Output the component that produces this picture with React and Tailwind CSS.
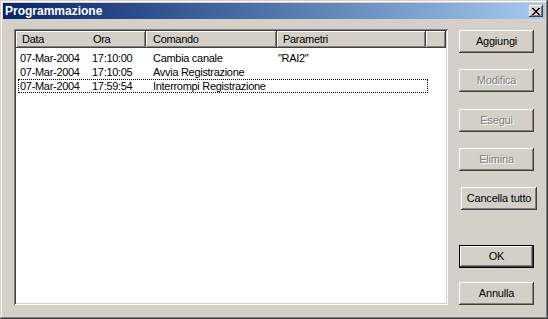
// ===== COSTANTI =====

const FONT = "font-['Liberation_Sans',Arial,sans-serif]"

const RAISED =
  'shadow-[inset_-1px_-1px_#404040,inset_1px_1px_#ffffff,inset_-2px_-2px_#808080,inset_2px_2px_#d4d0c8]'

const rows = [
  { data: '07-Mar-2004', ora: '17:10:00', comando: 'Cambia canale', parametri: '"RAI2"' },
  { data: '07-Mar-2004', ora: '17:10:05', comando: 'Avvia Registrazione', parametri: '' },
  { data: '07-Mar-2004', ora: '17:59:54', comando: 'Interrompi Registrazione', parametri: '', focus: true },
]

// ------ Pulsante stile Windows 2000 ------
const Button = ({ children, disabled, isDefault, className = '' }) => {
  const inner = (
    <div
      className={`flex h-full w-full items-center justify-center bg-[#d4d0c8] text-[11px] tracking-[-0.2px] ${RAISED} ${
        disabled ? 'text-[#808080] [text-shadow:1px_1px_0_#ffffff]' : 'text-black'
      }`}
    >
      {children}
    </div>
  )

  if (isDefault) {
    return <div className={`h-[23px] border border-black ${className}`}>{inner}</div>
  }

  return <div className={`h-[23px] ${className}`}>{inner}</div>
}

// ------ Intestazione colonna ------
const HeaderCell = ({ width, children, className = '' }) => (
  <div
    className={`flex h-full shrink-0 items-center bg-[#d4d0c8] shadow-[inset_-1px_-1px_#404040,inset_1px_1px_#ffffff,inset_-2px_-2px_#808080] ${className}`}
    style={{ width }}
  >
    {children}
  </div>
)

// ===== RENDER =====

const App = () => {
  return (
    <div
      className={`${FONT} flex h-[319px] w-[548px] flex-col bg-[#d4d0c8] p-[3px] shadow-[inset_-1px_-1px_#404040,inset_1px_1px_#d4d0c8,inset_-2px_-2px_#808080,inset_2px_2px_#ffffff]`}
    >
      {/* barra del titolo */}
      <div className="flex h-[16px] shrink-0 items-center justify-between bg-gradient-to-r from-[#0a246a] to-[#a6caf0] pl-[2px] pr-[2px]">
        <span className="text-[12px] font-bold leading-none text-white">Programmazione</span>
        <div className={`flex h-[12px] w-[14px] items-center justify-center bg-[#d4d0c8] ${RAISED}`}>
          <svg width="8" height="7" viewBox="0 0 8 7" shapeRendering="crispEdges">
            <path d="M0 0h2v1H0zM6 0h2v1H6zM1 1h2v1H1zM5 1h2v1H5zM2 2h4v1H2zM3 3h2v1H3zM2 4h4v1H2zM1 5h2v1H1zM5 5h2v1H5zM0 6h2v1H0zM6 6h2v1H6z" fill="#000" />
          </svg>
        </div>
      </div>

      <div className="flex flex-1 pl-[11px] pt-[10px]">
        {/* lista */}
        <div className="flex h-[276px] w-[434px] flex-col bg-white p-[2px] shadow-[inset_1px_1px_#808080,inset_-1px_-1px_#ffffff,inset_2px_2px_#404040,inset_-2px_-2px_#d4d0c8]">
          <div className="flex h-[17px] shrink-0 text-[11px] tracking-[-0.3px] text-black">
            <HeaderCell width={130} className="pl-[6px]">
              <span className="w-[71px]">Data</span>
              <span>Ora</span>
            </HeaderCell>
            <HeaderCell width={131} className="pl-[7px]">Comando</HeaderCell>
            <HeaderCell width={149} className="pl-[6px]">Parametri</HeaderCell>
            <HeaderCell width={20} />
          </div>

          <div className="flex flex-col pt-[3px] text-[11px] tracking-[-0.3px] text-black">
            {rows.map((row, i) => (
              <div
                key={i}
                className={`ml-[2px] flex h-[14px] w-[410px] items-center border pl-[1px] ${
                  row.focus ? 'border-dotted border-black' : 'border-transparent'
                }`}
              >
                <span className="w-[72px] shrink-0">{row.data}</span>
                <span className="w-[61px] shrink-0">{row.ora}</span>
                <span className="w-[125px] shrink-0">{row.comando}</span>
                <span>{row.parametri}</span>
              </div>
            ))}
          </div>
        </div>

        {/* pulsanti */}
        <div className="ml-[11px] flex flex-col pt-[1px]">
          <Button className="w-[75px]">Aggiungi</Button>
          <Button className="mt-[16px] w-[75px]" disabled>Modifica</Button>
          <Button className="mt-[17px] w-[75px]" disabled>Esegui</Button>
          <Button className="mt-[16px] w-[75px]" disabled>Elimina</Button>
          <Button className="ml-[2px] mt-[16px] w-[76px]">Cancella tutto</Button>
          <Button className="mt-[35px] w-[75px]" isDefault>OK</Button>
          <Button className="mt-[14px] w-[75px]">Annulla</Button>
        </div>
      </div>
    </div>
  )
}

export default App
